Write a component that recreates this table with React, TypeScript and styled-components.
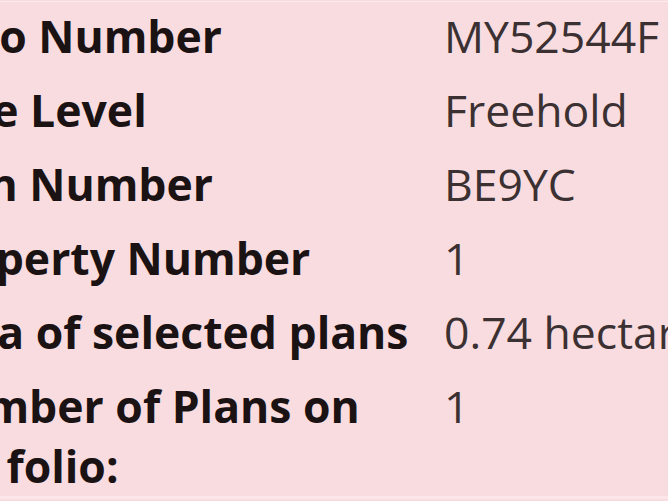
import styled, { createGlobalStyle } from 'styled-components';

const GlobalStyle = createGlobalStyle`
  html, body {
    margin: 0;
    padding: 0;
    background: #f9dcdf;
    overflow: hidden;
  }
`;

const Page = styled.div`
  width: 668px;
  height: 501px;
  overflow: hidden;
  padding-top: 1px;
  box-sizing: border-box;
  font-family: 'Open Sans', 'Liberation Sans', sans-serif;
  font-size: 44.5px;
  line-height: 60px;
`;

// the view is a crop: label column starts off-screen to the left
const Table = styled.div`
  margin-left: -80px;
  border-top: 1px solid #fdeaec;
  border-bottom: 3px solid #fde6e9;
`;

const Row = styled.div<{ $first?: boolean }>`
  display: grid;
  grid-template-columns: 524px auto;
  padding-top: ${(p) => (p.$first ? '4px' : '14px')};
  white-space: nowrap;
`;

const Label = styled.div`
  font-weight: 700;
  color: #1b1214;
  white-space: normal;
  width: 498px;
`;

const Value = styled.div`
  font-weight: 400;
  color: #3b3032;
`;

const rows = [
  ['Folio Number', 'MY52544F'],
  ['Title Level', 'Freehold'],
  ['Plan Number', 'BE9YC'],
  ['Property Number', '1'],
  ['Area of selected plans', '0.74 hectares'],
  ['Number of Plans on the folio:', '1'],
];

export default function App() {
  return (
    <Page>
      <GlobalStyle />
      <Table>
        {rows.map(([label, value], i) => (
          <Row key={label} $first={i === 0}>
            <Label>{label}</Label>
            <Value>{value}</Value>
          </Row>
        ))}
      </Table>
    </Page>
  );
}
